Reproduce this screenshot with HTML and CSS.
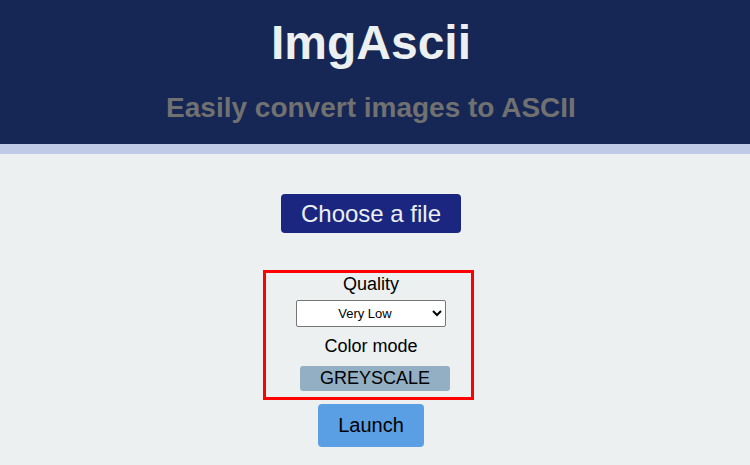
FILE: index.html
```html
<!DOCTYPE html>
<html>
<head>
<meta charset="utf-8">
<title>ImgAscii</title>
<link rel="stylesheet" href="styles.css">
</head>
<body>
<header class="header">
  <h1 class="title">ImgAscii</h1>
  <h2 class="subtitle">Easily convert images to ASCII</h2>
</header>
<main class="main">
  <button class="file-btn">Choose a file</button>
  <div class="options">
    <label class="opt-label">Quality</label>
    <select class="quality">
      <option>Very Low</option>
      <option>Low</option>
      <option>Medium</option>
      <option>High</option>
    </select>
    <label class="opt-label color-label">Color mode</label>
    <button class="mode-btn">GREYSCALE</button>
  </div>
  <button class="launch-btn">Launch</button>
</main>
</body>
</html>
```
FILE: styles.css
```css
html, body {
  margin: 0;
  padding: 0;
}
body {
  background: #ecf0f1;
  font-family: "Liberation Sans", Arial, sans-serif;
  height: 465px;
  overflow: hidden;
}
.header {
  background: #162755;
  border-bottom: 10px solid #bfcbe6;
  padding: 15px 8px 20px 0;
  height: 154px;
  box-sizing: border-box;
  display: flex;
  flex-direction: column;
  align-items: center;
}
.title {
  margin: 0;
  font-size: 48px;
  line-height: 56px;
  font-weight: bold;
  color: #ecf0f1;
}
.subtitle {
  margin: 21px 0 0;
  font-size: 28px;
  line-height: 32px;
  font-weight: bold;
  color: #717171;
}
.main {
  display: flex;
  flex-direction: column;
  align-items: center;
  padding: 40px 8px 0 0;
}
.file-btn {
  width: 180px;
  height: 39px;
  background: #1a2680;
  color: #ecf0f1;
  border: none;
  border-radius: 4px;
  font-family: inherit;
  font-size: 24px;
  line-height: 27px;
  padding: 0;
}
.options {
  margin-top: 37px;
  margin-right: 5px;
  width: 211px;
  box-sizing: border-box;
  border: 3px solid #ff0000;
  display: flex;
  flex-direction: column;
  align-items: center;
  padding: 1px 0 6px 5px;
}
.opt-label {
  font-size: 18px;
  line-height: 21px;
  color: #000;
}
.quality {
  margin-top: 5px;
  width: 150px;
  height: 27px;
  font-family: inherit;
  font-size: 13px;
  text-align: center;
  text-align-last: center;
  background: #fff;
  color: #000;
  border: 1px solid #767676;
  border-radius: 2px;
}
.color-label {
  margin-top: 9px;
}
.mode-btn {
  margin-top: 9px;
  margin-left: 8px;
  width: 150px;
  height: 25px;
  background: #93afc3;
  border: none;
  border-radius: 3px;
  font-family: inherit;
  font-size: 18px;
  color: #000;
  padding: 0;
}
.launch-btn {
  margin-top: 4px;
  width: 106px;
  height: 43px;
  background: #5a9fe3;
  border: none;
  border-radius: 4px;
  font-family: inherit;
  font-size: 20px;
  color: #000;
  padding: 0;
}
```
